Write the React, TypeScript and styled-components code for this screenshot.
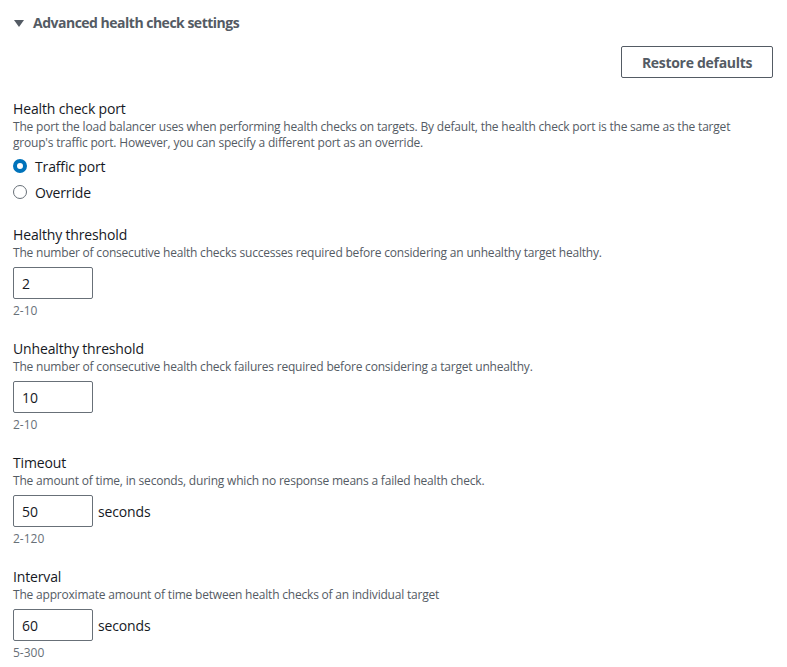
import React, { useState } from 'react';
import styled, { createGlobalStyle } from 'styled-components';

const GlobalStyle = createGlobalStyle`
  body {
    margin: 0;
    background: #ffffff;
    font-family: 'Open Sans', 'Noto Sans', sans-serif;
    color: #16191f;
  }
`;

type Field = {
  label: string;
  description: string;
  value: string;
  hint: string;
  unit?: string;
};

const fields: Field[] = [
  {
    label: 'Healthy threshold',
    description:
      'The number of consecutive health checks successes required before considering an unhealthy target healthy.',
    value: '2',
    hint: '2-10',
  },
  {
    label: 'Unhealthy threshold',
    description:
      'The number of consecutive health check failures required before considering a target unhealthy.',
    value: '10',
    hint: '2-10',
  },
  {
    label: 'Timeout',
    description:
      'The amount of time, in seconds, during which no response means a failed health check.',
    value: '50',
    hint: '2-120',
    unit: 'seconds',
  },
  {
    label: 'Interval',
    description:
      'The approximate amount of time between health checks of an individual target',
    value: '60',
    hint: '5-300',
    unit: 'seconds',
  },
];

const App = () => {
  const [port, setPort] = useState<'traffic' | 'override'>('traffic');

  return (
    <Page>
      <GlobalStyle />
      <Header>
        <Caret />
        <HeaderTitle>Advanced health check settings</HeaderTitle>
      </Header>
      <Toolbar>
        <RestoreButton>Restore defaults</RestoreButton>
      </Toolbar>
      <Form>
        <Section>
          <Label>Health check port</Label>
          <Description>
            The port the load balancer uses when performing health checks on targets. By default, the
            health check port is the same as the target group's traffic port. However, you can specify a
            different port as an override.
          </Description>
          <RadioGroup>
            <RadioRow onClick={() => setPort('traffic')}>
              <RadioDot checked={port === 'traffic'} />
              Traffic port
            </RadioRow>
            <RadioRow onClick={() => setPort('override')}>
              <RadioDot checked={port === 'override'} />
              Override
            </RadioRow>
          </RadioGroup>
        </Section>
        {fields.map((f) => (
          <Section key={f.label}>
            <Label>{f.label}</Label>
            <Description>{f.description}</Description>
            <InputRow>
              <NumberInput defaultValue={f.value} />
              {f.unit && <Unit>{f.unit}</Unit>}
            </InputRow>
            <Hint>{f.hint}</Hint>
          </Section>
        ))}
      </Form>
    </Page>
  );
};

export default App;

const Page = styled.div`
  padding: 13px 14px 0 13px;
`;

const Header = styled.div`
  display: flex;
  align-items: center;
  height: 20px;
`;

const Caret = styled.span`
  width: 0;
  height: 0;
  margin-left: 1px;
  margin-right: 9px;
  border-left: 5px solid transparent;
  border-right: 5px solid transparent;
  border-top: 7px solid #545b64;
`;

const HeaderTitle = styled.span`
  font-size: 14px;
  font-weight: 700;
  line-height: 20px;
  letter-spacing: -0.5px;
  color: #545b64;
`;

const Toolbar = styled.div`
  display: flex;
  justify-content: flex-end;
  margin-top: 13px;
`;

const RestoreButton = styled.button`
  width: 152px;
  height: 32px;
  border: 1px solid #545b64;
  border-radius: 2px;
  background: #ffffff;
  color: #545b64;
  font-family: inherit;
  font-size: 14px;
  font-weight: 700;
  letter-spacing: -0.3px;
  cursor: pointer;
`;

const Form = styled.div`
  display: flex;
  flex-direction: column;
  gap: 20px;
  margin-top: 21px;
`;

const Section = styled.div`
  display: flex;
  flex-direction: column;
`;

const Label = styled.div`
  font-size: 14px;
  line-height: 20px;
  letter-spacing: -0.15px;
  color: #16191f;
`;

const Description = styled.div`
  font-size: 12px;
  line-height: 16px;
  letter-spacing: -0.2px;
  color: #545b64;
`;

const RadioGroup = styled.div`
  display: flex;
  flex-direction: column;
  margin-top: 2px;
`;

const RadioRow = styled.label`
  display: flex;
  align-items: center;
  gap: 8px;
  height: 26px;
  font-size: 14px;
  letter-spacing: -0.15px;
  color: #16191f;
  cursor: pointer;
`;

const RadioDot = styled.span<{ checked: boolean }>`
  box-sizing: border-box;
  width: 14px;
  height: 14px;
  border-radius: 50%;
  border: ${(p) => (p.checked ? '4px solid #0073bb' : '1px solid #687078')};
  background: #ffffff;
`;

const InputRow = styled.div`
  display: flex;
  align-items: center;
  gap: 5px;
  margin-top: 6px;
`;

const NumberInput = styled.input`
  box-sizing: border-box;
  width: 80px;
  height: 32px;
  padding: 0 8px;
  border: 1px solid #687078;
  border-radius: 2px;
  font-family: inherit;
  font-size: 14px;
  color: #16191f;
  outline: none;
`;

const Unit = styled.span`
  font-size: 14px;
  letter-spacing: -0.15px;
  color: #16191f;
`;

const Hint = styled.div`
  margin-top: 4px;
  font-size: 12px;
  line-height: 16px;
  color: #687078;
`;
